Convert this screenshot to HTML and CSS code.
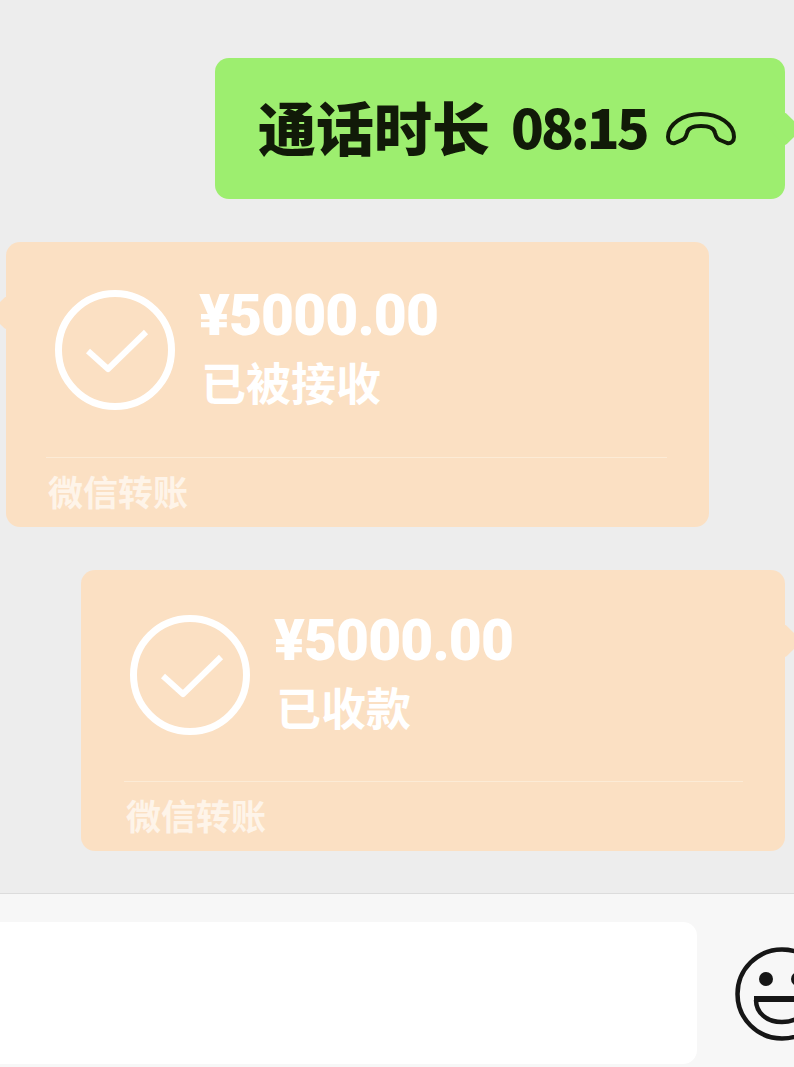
FILE: index.html
```html
<!DOCTYPE html>
<html lang="zh-CN">
<head>
  <meta charset="UTF-8" />
  <title>聊天</title>
  <link rel="stylesheet" href="styles.css">
</head>
<body>
  <div class="chat">
    <div class="call bubble-right">
      <span class="call-text">通话时长</span>
      <span class="call-time">08:15</span>
      <svg class="hangup" width="72" height="36" viewBox="0 0 72 36">
        <path d="M3 26C3 13 18 3 36 3s33 10 33 23c0 4-3 7-7 6l-7-3c-3-1-4-3-5-7-1-5-5-7-14-7s-13 2-14 7c-1 4-2 6-5 7l-7 3c-4 1-7-2-7-6z" fill="none" stroke="#111a08" stroke-width="4" stroke-linejoin="round"/>
      </svg>
    </div>

    <div class="transfer transfer-received bubble-left">
      <div class="transfer-main">
        <svg class="check" width="120" height="120" viewBox="0 0 120 120">
          <circle cx="60" cy="60" r="56.5" fill="none" stroke="#fff" stroke-width="7"/>
          <path d="M33 61l20 18 38-37" fill="none" stroke="#fff" stroke-width="6" stroke-linejoin="round"/>
        </svg>
        <div class="transfer-info">
          <div class="amount">¥5000.00</div>
          <div class="status">已被接收</div>
        </div>
      </div>
      <div class="transfer-foot">微信转账</div>
    </div>

    <div class="transfer transfer-sent bubble-right">
      <div class="transfer-main">
        <svg class="check" width="120" height="120" viewBox="0 0 120 120">
          <circle cx="60" cy="60" r="56.5" fill="none" stroke="#fff" stroke-width="7"/>
          <path d="M33 61l20 18 38-37" fill="none" stroke="#fff" stroke-width="6" stroke-linejoin="round"/>
        </svg>
        <div class="transfer-info">
          <div class="amount">¥5000.00</div>
          <div class="status">已收款</div>
        </div>
      </div>
      <div class="transfer-foot">微信转账</div>
    </div>
  </div>

  <div class="composer">
    <div class="composer-input"></div>
    <svg class="smiley" width="96" height="96" viewBox="0 0 96 96">
      <circle cx="48" cy="48" r="44.5" fill="none" stroke="#161616" stroke-width="4.5"/>
      <circle cx="32" cy="33" r="7" fill="#161616"/>
      <circle cx="64" cy="33" r="7" fill="#161616"/>
      <path d="M22 54c0 13 11 22 26 22s26-9 26-22" fill="none" stroke="#161616" stroke-width="4.5"/>
      <path d="M20 53h56" fill="none" stroke="#161616" stroke-width="6"/>
    </svg>
  </div>
</body>
</html>
```

FILE: styles.css
```css
html, body {
  margin: 0;
  padding: 0;
}

body {
  width: 794px;
  height: 1067px;
  overflow: hidden;
  background-color: #ededed;
  font-family: "Noto Sans CJK SC", "Liberation Sans", sans-serif;
  display: flex;
  flex-direction: column;
}

.chat {
  height: 835px;
  padding-top: 58px;
}

.bubble-right,
.bubble-left {
  position: relative;
}

.bubble-right::after,
.bubble-left::after {
  content: "";
  position: absolute;
  width: 24px;
  height: 24px;
  background-color: inherit;
  transform: rotate(45deg);
  border-radius: 3px;
}

.bubble-right::after {
  right: -12px;
  top: 59px;
}

.bubble-left::after {
  left: -12px;
  top: 59px;
}

.call {
  margin-left: 215px;
  width: 570px;
  height: 141px;
  box-sizing: border-box;
  padding-left: 43px;
  background-color: #9dee6f;
  border-radius: 14px;
  display: flex;
  align-items: center;
  color: #111a08;
}

.call-text {
  font-size: 58px;
  font-weight: 900;
  line-height: 1;
  margin-bottom: 6px;
  white-space: nowrap;
}

.call-time {
  font-size: 54px;
  font-weight: 900;
  line-height: 1;
  letter-spacing: -3px;
  margin-left: 21px;
  margin-bottom: 6px;
  white-space: nowrap;
}

.hangup {
  margin-left: 18px;
}

.transfer {
  background-color: #fbe0c3;
  border-radius: 14px;
  box-sizing: border-box;
  color: #fff;
}

.transfer-received {
  margin-top: 43px;
  margin-left: 6px;
  width: 703px;
  height: 285px;
  padding: 48px 42px 0 40px;
}

.transfer-sent {
  margin-top: 43px;
  margin-left: 81px;
  width: 704px;
  height: 281px;
  padding: 45px 42px 0 43px;
}

.transfer-main {
  display: flex;
  height: 167px;
  border-bottom: 1px solid #fcebd6;
}

.transfer-sent .transfer-main {
  height: 166px;
}

.check {
  margin-left: 9px;
  flex-shrink: 0;
}

.transfer-sent .check {
  margin-left: 6px;
}

.transfer-info {
  margin-left: 24px;
}

.amount {
  font-family: Roboto, "Liberation Sans", sans-serif;
  font-size: 57px;
  font-weight: 900;
  line-height: 56px;
  letter-spacing: -0.9px;
  margin-top: -2px;
  white-space: nowrap;
}

.status {
  font-size: 45px;
  font-weight: 700;
  line-height: 60px;
  margin-top: 8px;
  margin-left: 2px;
  white-space: nowrap;
}

.transfer-foot {
  font-size: 35px;
  font-weight: 700;
  line-height: 40px;
  margin-top: 13px;
  margin-left: 2px;
  color: #fef4e9;
  white-space: nowrap;
}

.composer {
  flex: 1;
  border-top: 1px solid #dcdcdc;
  background-color: #f7f7f7;
  padding-top: 28px;
  display: flex;
  align-items: flex-start;
}

.composer-input {
  width: 697px;
  height: 142px;
  background-color: #fff;
  border-radius: 0 14px 14px 0;
  flex-shrink: 0;
}

.smiley {
  margin-left: 37px;
  margin-top: 24px;
  flex-shrink: 0;
}
```
